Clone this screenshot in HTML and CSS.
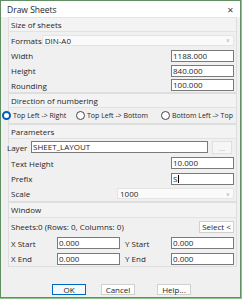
FILE: index.html
```html
<!DOCTYPE html>
<html lang="en">
<head>
    <meta charset="UTF-8">
    <title>Draw Sheets</title>
    <link rel="stylesheet" href="styles.css">
</head>
<body>
    <div class="window">
        <div class="titlebar">
            <span class="title">Draw Sheets</span>
            <span class="close">&#x2715;</span>
        </div>

        <div class="content">
            <div class="group">
                <div class="group-title">Size of sheets</div>
                <div class="row tall">
                    <span class="label">Formats</span>
                    <div class="combo wide"><span>DIN-A0</span><span class="arrow">&#x2228;</span></div>
                </div>
                <div class="row">
                    <span class="label">Width</span>
                    <div class="field">1188.000</div>
                </div>
                <div class="row">
                    <span class="label">Height</span>
                    <div class="field">840.000</div>
                </div>
                <div class="row short">
                    <span class="label">Rounding</span>
                    <div class="field">100.000</div>
                </div>
            </div>

            <div class="group">
                <div class="group-title">Direction of numbering</div>
                <div class="row radios">
                    <label class="radio first"><span class="dot checked"></span>Top Left -&gt; Right</label>
                    <label class="radio second"><span class="dot"></span>Top Left -&gt; Bottom</label>
                    <label class="radio"><span class="dot"></span>Bottom Left -&gt; Top</label>
                </div>
            </div>

            <div class="group">
                <div class="group-title">Parameters</div>
                <div class="row tall">
                    <span class="label layer-label">Layer</span>
                    <div class="field layer">SHEET_LAYOUT</div>
                    <div class="btn dots">...</div>
                </div>
                <div class="row tall">
                    <span class="label">Text Height</span>
                    <div class="field">10.000</div>
                </div>
                <div class="row">
                    <span class="label">Prefix</span>
                    <div class="field">S<span class="caret"></span></div>
                </div>
                <div class="row">
                    <span class="label">Scale</span>
                    <div class="combo scale"><span>1000</span><span class="arrow">&#x2228;</span></div>
                </div>
            </div>

            <div class="group">
                <div class="group-title big">Window</div>
                <div class="row taller">
                    <span class="label">Sheets:0 (Rows: 0, Columns: 0)</span>
                    <div class="btn select">Select &lt;</div>
                </div>
                <div class="row tall">
                    <span class="label xlabel">X Start</span>
                    <div class="field">0.000</div>
                    <span class="label ylabel">Y Start</span>
                    <div class="field">0.000</div>
                </div>
                <div class="row">
                    <span class="label xlabel">X End</span>
                    <div class="field">0.000</div>
                    <span class="label ylabel">Y End</span>
                    <div class="field">0.000</div>
                </div>
            </div>

            <div class="buttons">
                <div class="btn ok">OK</div>
                <div class="btn cancel">Cancel</div>
                <div class="btn help">Help...</div>
            </div>
        </div>
    </div>
</body>
</html>
```

FILE: styles.css
```css
html, body {
    margin: 0;
    padding: 0;
}
body {
    width: 242px;
    height: 299px;
    background-color: #8fc48f;
    font-family: 'Open Sans', 'Noto Sans', Arial, sans-serif;
    font-size: 8px;
    color: #262626;
}
.window {
    box-sizing: border-box;
    width: 241px;
    height: 298px;
    background-color: #f0f0f0;
    border: 1px solid #5f8f63;
}
.titlebar {
    box-sizing: border-box;
    height: 16px;
    background-color: #ffffff;
    display: flex;
    align-items: center;
    justify-content: space-between;
    padding: 0 6px 0 6px;
    font-size: 8.5px;
}
.close {
    font-size: 8px;
    color: #444;
}
.content {
    padding: 0 3px 0 7px;
}
.group {
    border: 1px solid #dedede;
    border-top: 1px solid #e4e4e4;
    padding: 0 2px 0 2px;
}
.group + .group {
    border-top: none;
}
.group-title {
    height: 13px;
    line-height: 13px;
    margin: 0 -2px 0 -2px;
    padding-left: 2px;
    border-bottom: 1px solid #e2e2e2;
    background-color: #f3f3f3;
}
.group + .group .group-title {
    border-top: 1px solid #dedede;
}
.group-title.big {
    height: 14px;
    line-height: 14px;
}
.row {
    display: flex;
    align-items: center;
    height: 15px;
}
.row.short {
    height: 14px;
}
.row.tall {
    height: 16px;
}
.row.taller {
    height: 17px;
}
.label {
    flex: 1;
    white-space: nowrap;
}
.layer-label {
    flex: none;
    width: 24px;
    margin-left: -4px;
}
.field {
    box-sizing: border-box;
    height: 12px;
    line-height: 10px;
    background-color: #fff;
    border: 1px solid #7a7a7a;
    padding: 0 1px;
    width: 63px;
}
.field.layer {
    width: 177px;
}
.caret {
    display: inline-block;
    width: 1px;
    height: 8px;
    background: #000;
    vertical-align: middle;
    margin-left: 1px;
}
.combo {
    box-sizing: border-box;
    height: 11px;
    display: flex;
    align-items: center;
    justify-content: space-between;
    background-color: #fafafa;
    border: 1px solid #e4e4e4;
    padding: 0 3px 0 2px;
}
.combo.wide {
    width: 196px;
}
.combo.scale {
    width: 117px;
}
.arrow {
    color: #999;
    font-size: 5px;
}
.radios {
    margin-left: -9px;
    font-size: 7px;
}
.radio {
    display: flex;
    align-items: center;
    white-space: nowrap;
}
.radio.first {
    width: 74px;
}
.radio.second {
    width: 85px;
}
.dot {
    box-sizing: border-box;
    width: 9px;
    height: 9px;
    border-radius: 50%;
    border: 1px solid #444;
    margin-right: 2px;
    background: #fff;
}
.dot.checked {
    border: 2.5px solid #005fb8;
}
.xlabel {
    flex: none;
    width: 46px;
}
.ylabel {
    flex: none;
    width: 46px;
    margin-left: 5px;
}
.btn {
    box-sizing: border-box;
    height: 12px;
    border: 1px solid #d0d0d0;
    background-color: #fdfdfd;
    display: flex;
    align-items: center;
    justify-content: center;
}
.btn.dots {
    width: 20px;
    height: 13px;
    margin-left: 4px;
    background-color: #f6f6f6;
    border-color: #e0e0e0;
    color: #aaa;
}
.btn.select {
    width: 35px;
}
.buttons {
    display: flex;
    margin-top: 17px;
    padding-left: 44px;
}
.buttons .btn {
    width: 34px;
    height: 11px;
}
.buttons .btn.ok {
    border: 1px solid #0067c0;
    background-color: #f4f9fd;
}
.buttons .btn.cancel {
    margin-left: 15px;
}
.buttons .btn.help {
    margin-left: 22px;
}
```
